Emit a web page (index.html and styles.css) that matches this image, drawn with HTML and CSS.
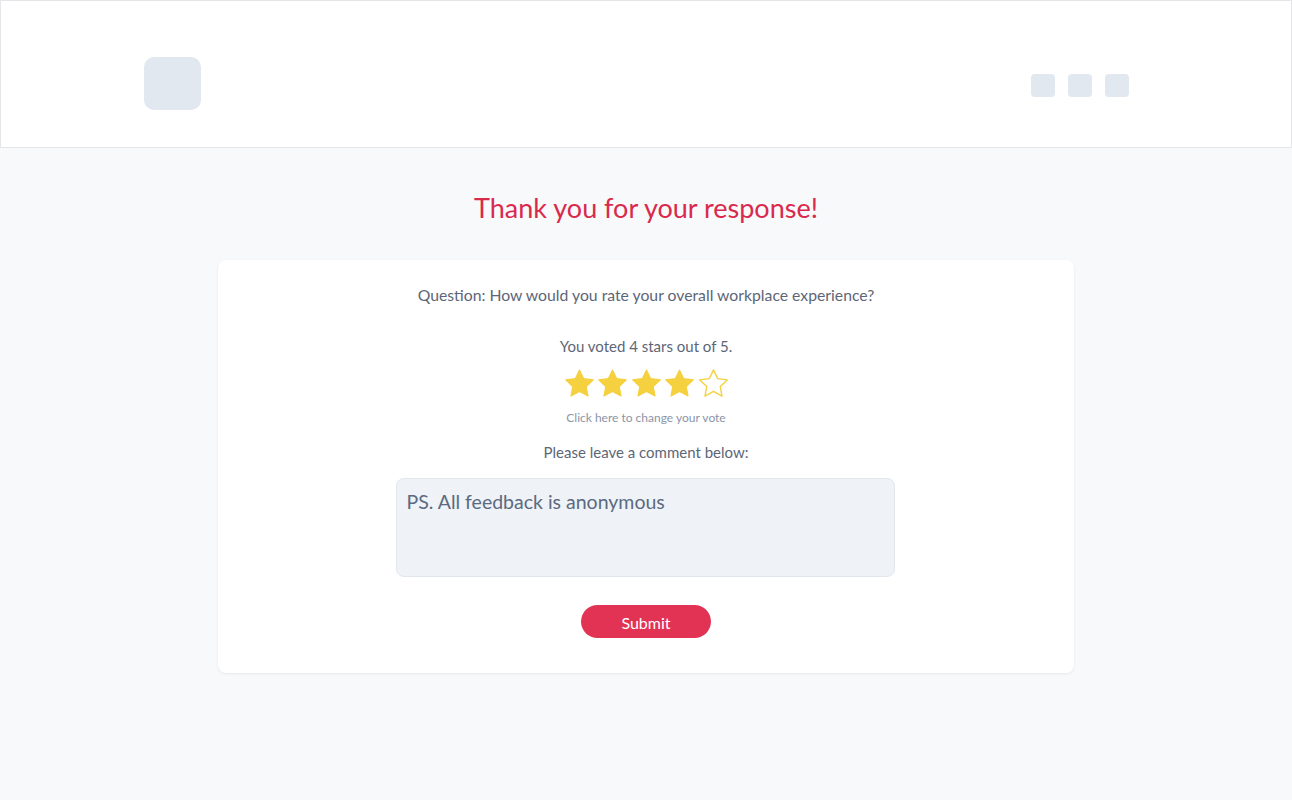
FILE: index.html
```html
<!DOCTYPE html>
<html lang="en">
<head>
<meta charset="utf-8">
<title>Thank you</title>
<link rel="stylesheet" href="styles.css">
</head>
<body>
<header class="topbar">
  <div class="logo"></div>
  <nav class="nav-icons">
    <span class="nav-dot"></span>
    <span class="nav-dot"></span>
    <span class="nav-dot"></span>
  </nav>
</header>
<main class="page">
  <h1 class="title">Thank you for your response!</h1>
  <section class="card">
    <p class="question">Question: How would you rate your overall workplace experience?</p>
    <p class="voted">You voted 4 stars out of 5.</p>
    <div class="stars">
      <svg class="star filled" viewBox="1.5 1.2 21 20.2"><path d="M12 1.8l3.05 6.35 6.95.9-5.1 4.8 1.3 6.9L12 17.4l-6.2 3.35 1.3-6.9L2 9.05l6.95-.9z"/></svg>
      <svg class="star filled" viewBox="1.5 1.2 21 20.2"><path d="M12 1.8l3.05 6.35 6.95.9-5.1 4.8 1.3 6.9L12 17.4l-6.2 3.35 1.3-6.9L2 9.05l6.95-.9z"/></svg>
      <svg class="star filled" viewBox="1.5 1.2 21 20.2"><path d="M12 1.8l3.05 6.35 6.95.9-5.1 4.8 1.3 6.9L12 17.4l-6.2 3.35 1.3-6.9L2 9.05l6.95-.9z"/></svg>
      <svg class="star filled" viewBox="1.5 1.2 21 20.2"><path d="M12 1.8l3.05 6.35 6.95.9-5.1 4.8 1.3 6.9L12 17.4l-6.2 3.35 1.3-6.9L2 9.05l6.95-.9z"/></svg>
      <svg class="star empty" viewBox="1.5 1.2 21 20.2"><path d="M12 1.8l3.05 6.35 6.95.9-5.1 4.8 1.3 6.9L12 17.4l-6.2 3.35 1.3-6.9L2 9.05l6.95-.9z"/></svg>
    </div>
    <a class="change-vote" href="#">Click here to change your vote</a>
    <p class="prompt">Please leave a comment below:</p>
    <textarea class="comment" placeholder="PS. All feedback is anonymous"></textarea>
    <button class="submit" type="button">Submit</button>
  </section>
</main>
</body>
</html>
```

FILE: styles.css
```css
* { box-sizing: border-box; }

html, body {
  margin: 0;
  padding: 0;
}

body {
  background: #f8f9fb;
  font-family: Lato, "Open Sans", "Liberation Sans", sans-serif;
  color: #5d6677;
  min-height: 800px;
}

.topbar {
  height: 148px;
  background: #ffffff;
  border: 1px solid #e4e6ea;
  display: flex;
  justify-content: space-between;
  align-items: flex-start;
  padding: 56px 162px 0 143px;
}

.logo {
  width: 57px;
  height: 53px;
  border-radius: 10px;
  background: #e2e8f0;
}

.nav-icons {
  display: flex;
  gap: 13px;
  margin-top: 17px;
}

.nav-dot {
  width: 24px;
  height: 23px;
  border-radius: 4px;
  background: #e2e8f0;
}

.page {
  display: flex;
  flex-direction: column;
  align-items: center;
}

.title {
  margin: 44px 0 36px;
  font-size: 27px;
  line-height: 32px;
  font-weight: 400;
  color: #d92a4d;
}

.card {
  width: 856px;
  background: #ffffff;
  border-radius: 8px;
  box-shadow: 0 1px 3px rgba(30, 41, 59, 0.08);
  display: flex;
  flex-direction: column;
  align-items: center;
  padding: 25px 0 35px;
}

.question,
.voted,
.prompt {
  margin: 0;
  font-size: 15px;
  line-height: 20px;
  color: #5d6677;
}

.question {
  font-size: 15.75px;
  line-height: 19px;
}

.voted { margin-top: 32px; }

.stars {
  display: flex;
  gap: 4.5px;
  margin-top: 13px;
  height: 28px;
}

.star {
  width: 29px;
  height: 28px;
  display: block;
}

.star path {
  stroke: #f5d03f;
  stroke-linejoin: round;
}

.star.filled path {
  fill: #f5d03f;
  stroke-width: 0.8;
}

.star.empty path {
  fill: none;
  stroke-width: 1;
}

.change-vote {
  margin-top: 13px;
  font-size: 12px;
  line-height: 16px;
  color: #8b95a8;
  text-decoration: none;
}

.prompt { margin-top: 16px; }

.comment {
  margin-top: 16px;
  margin-right: 2px;
  width: 499px;
  height: 99px;
  resize: none;
  background: #eff2f7;
  border: 1px solid #e2e7ee;
  border-radius: 8px;
  padding: 11px 10px;
  font-family: Lato, "Open Sans", "Liberation Sans", sans-serif;
  font-size: 19.5px;
  line-height: 23px;
  color: #5b6a80;
  outline: none;
}

.comment::placeholder {
  color: #5b6a80;
  opacity: 1;
}

.submit {
  margin-top: 28px;
  width: 130px;
  height: 33px;
  border: none;
  border-radius: 17px;
  background: #e23355;
  color: #ffffff;
  font-family: Lato, "Open Sans", "Liberation Sans", sans-serif;
  font-size: 16px;
  line-height: 20px;
  padding: 2px 0 0;
  cursor: pointer;
}
```
